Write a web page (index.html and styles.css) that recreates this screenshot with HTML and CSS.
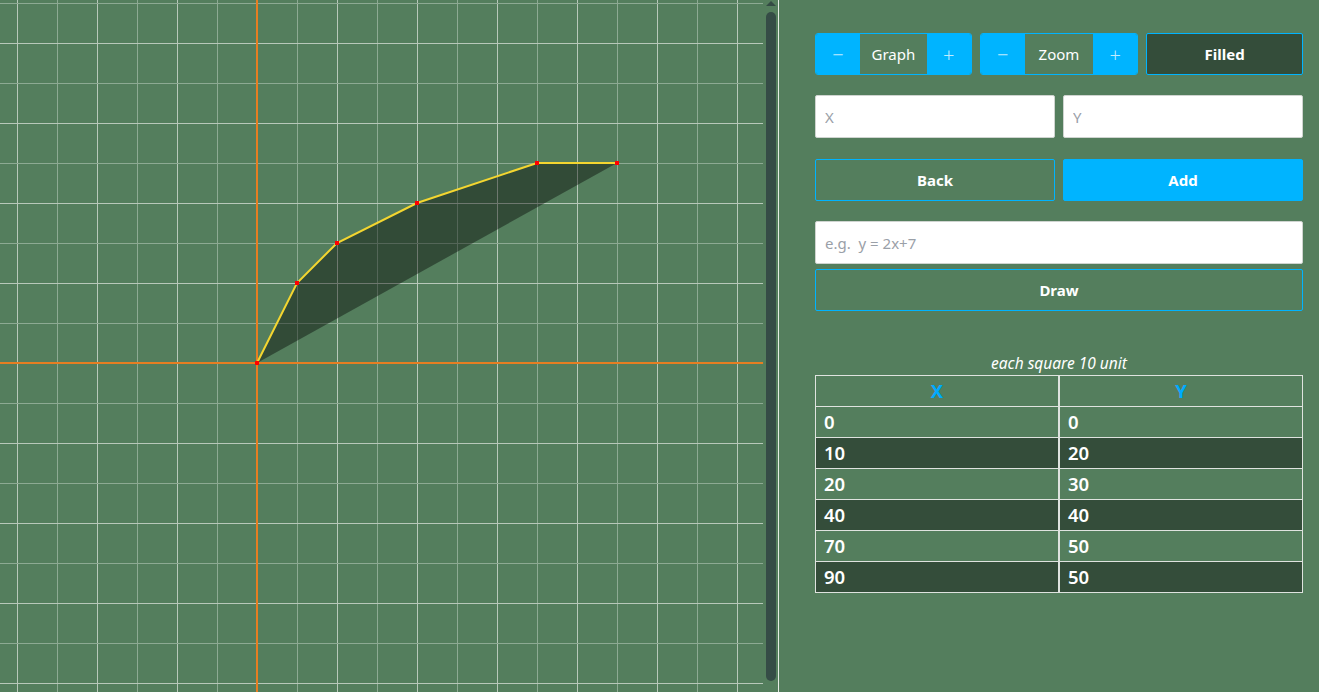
FILE: index.html
```html
<!DOCTYPE html>
<html>
<head>
<meta charset="utf-8">
<link rel="stylesheet" href="styles.css">
</head>
<body>
<div class="app">
  <div class="graph-pane">
    <svg class="grid" width="763" height="692" viewBox="0 0 763 692">
      <defs>
        <pattern id="g" x="17" y="3" width="80" height="80" patternUnits="userSpaceOnUse">
          <rect x="0" y="0" width="1" height="80" fill="#b8c8ba"/>
          <rect x="40" y="0" width="1" height="80" fill="#8daa93"/>
          <rect x="0" y="0" width="80" height="1" fill="#8daa93"/>
          <rect x="0" y="40" width="80" height="1" fill="#b8c8ba"/>
        </pattern>
      </defs>
      <rect x="0" y="0" width="763" height="692" fill="#547e5d"/>
      <rect x="0" y="0" width="763" height="692" fill="url(#g)"/>
      <rect x="256" y="0" width="2" height="692" fill="#e67e22"/>
      <rect x="0" y="362" width="763" height="2" fill="#e67e22"/>
      <polygon points="257,363 297,283 337,243 417,203 537,163 617,163" fill="#000" fill-opacity="0.4"/>
      <polyline points="257,363 297,283 337,243 417,203 537,163 617,163" fill="none" stroke="#f4d630" stroke-width="2"/>
      <g fill="#ff0000">
        <rect x="255" y="361" width="4" height="4"/>
        <rect x="295" y="281" width="4" height="4"/>
        <rect x="335" y="241" width="4" height="4"/>
        <rect x="415" y="201" width="4" height="4"/>
        <rect x="535" y="161" width="4" height="4"/>
        <rect x="615" y="161" width="4" height="4"/>
      </g>
    </svg>
    <div class="scrolltrack">
      <div class="arrow"></div>
      <div class="thumb"></div>
    </div>
  </div>
  <div class="panel">
    <div class="row top-row">
      <div class="stepper">
        <button class="step">−</button>
        <span class="step-label">Graph</span>
        <button class="step">+</button>
      </div>
      <div class="stepper">
        <button class="step">−</button>
        <span class="step-label">Zoom</span>
        <button class="step">+</button>
      </div>
      <button class="btn btn-dark">Filled</button>
    </div>
    <div class="row inputs-row">
      <input class="field" type="text" placeholder="X">
      <input class="field" type="text" placeholder="Y">
    </div>
    <div class="row actions-row">
      <button class="btn btn-outline">Back</button>
      <button class="btn btn-primary">Add</button>
    </div>
    <input class="field eq-field" type="text" placeholder="e.g.  y = 2x+7">
    <button class="btn btn-outline draw-btn">Draw</button>
    <div class="caption">each square 10 unit</div>
    <table class="points">
      <thead>
        <tr><th>X</th><th>Y</th></tr>
      </thead>
      <tbody>
        <tr><td>0</td><td>0</td></tr>
        <tr class="dark"><td>10</td><td>20</td></tr>
        <tr><td>20</td><td>30</td></tr>
        <tr class="dark"><td>40</td><td>40</td></tr>
        <tr><td>70</td><td>50</td></tr>
        <tr class="dark"><td>90</td><td>50</td></tr>
      </tbody>
    </table>
  </div>
</div>
</body>
</html>
```
FILE: styles.css
```css
* { box-sizing: border-box; }
html, body {
  margin: 0;
  padding: 0;
  width: 1319px;
  height: 692px;
  overflow: hidden;
  background: #547e5d;
  font-family: "Noto Sans", "Open Sans", sans-serif;
}
.app {
  display: flex;
  width: 1319px;
  height: 692px;
}
.graph-pane {
  display: flex;
  width: 779px;
  height: 692px;
  border-right: 1px solid #e6ece6;
}
.grid { display: block; flex: none; }
.scrolltrack {
  width: 15px;
  display: flex;
  flex-direction: column;
  align-items: flex-start;
  padding: 1px 0 11px 3px;
}
.arrow {
  width: 0;
  height: 0;
  border-left: 5px solid transparent;
  border-right: 5px solid transparent;
  border-bottom: 5px solid #344b44;
}
.thumb {
  margin-top: 6px;
  width: 10px;
  flex: 1;
  background: #354c46;
  border-radius: 5px;
}
.panel {
  width: 540px;
  padding: 33px 16px 0 36px;
  display: flex;
  flex-direction: column;
}
.row {
  display: flex;
  gap: 8px;
}
.top-row { height: 42px; }
.stepper {
  flex: 1;
  display: flex;
  border-radius: 3px;
  overflow: hidden;
  border: 1px solid #00b4ff;
}
.stepper:nth-child(2) { flex: 1.01; }
.step {
  width: 44px;
  flex: none;
  border: none;
  background: #00b4ff;
  color: rgba(255,255,255,0.75);
  font-family: "Noto Sans", sans-serif;
  font-size: 20px;
  font-weight: 300;
  padding: 0;
  cursor: pointer;
}
.step-label {
  flex: 1;
  display: flex;
  align-items: center;
  justify-content: center;
  color: #ffffff;
  font-size: 15px;
  background: #547e5d;
}
.btn {
  flex: 1;
  border-radius: 2px;
  font-family: "Noto Sans", sans-serif;
  font-size: 15px;
  font-weight: 700;
  color: #ffffff;
  padding: 0;
  cursor: pointer;
}
.btn-dark {
  background: #344d3a;
  border: 1px solid #00b4ff;
}
.btn-outline {
  background: #547e5d;
  border: 1px solid #00b4ff;
}
.btn-primary {
  background: #00b4ff;
  border: 1px solid #00b4ff;
}
.inputs-row {
  margin-top: 20px;
  height: 43px;
}
.field {
  flex: 1;
  min-width: 0;
  height: 43px;
  background: #ffffff;
  border: 1px solid #cfd4d0;
  border-radius: 2px;
  padding: 0 9px;
  font-family: "Noto Sans", sans-serif;
  font-size: 15px;
  color: #333;
  outline: none;
}
.field::placeholder { color: #9aa0a8; }
.actions-row {
  margin-top: 21px;
  height: 42px;
}
.eq-field {
  flex: none;
  margin-top: 20px;
  width: 100%;
}
.draw-btn {
  flex: none;
  margin-top: 5px;
  height: 42px;
  width: 100%;
}
.caption {
  margin-top: 42px;
  text-align: center;
  font-style: italic;
  font-size: 15.5px;
  line-height: 20px;
  color: #ffffff;
}
.points {
  margin-top: 2px;
  width: 488px;
  border-collapse: collapse;
  table-layout: fixed;
}
.points th, .points td {
  border: 1px solid #dfe3df;
  height: 31px;
  padding: 0 8px;
  font-family: "Noto Sans", sans-serif;
  font-size: 18.5px;
  font-weight: 600;
  text-align: left;
  color: #ffffff;
  line-height: 28px;
}
.points th:nth-child(2), .points td:nth-child(2) {
  border-left-width: 2px;
}
.points th {
  text-align: center;
  color: #00aaff;
  font-weight: 700;
}
.points tr.dark td { background: #344d3a; }
```
